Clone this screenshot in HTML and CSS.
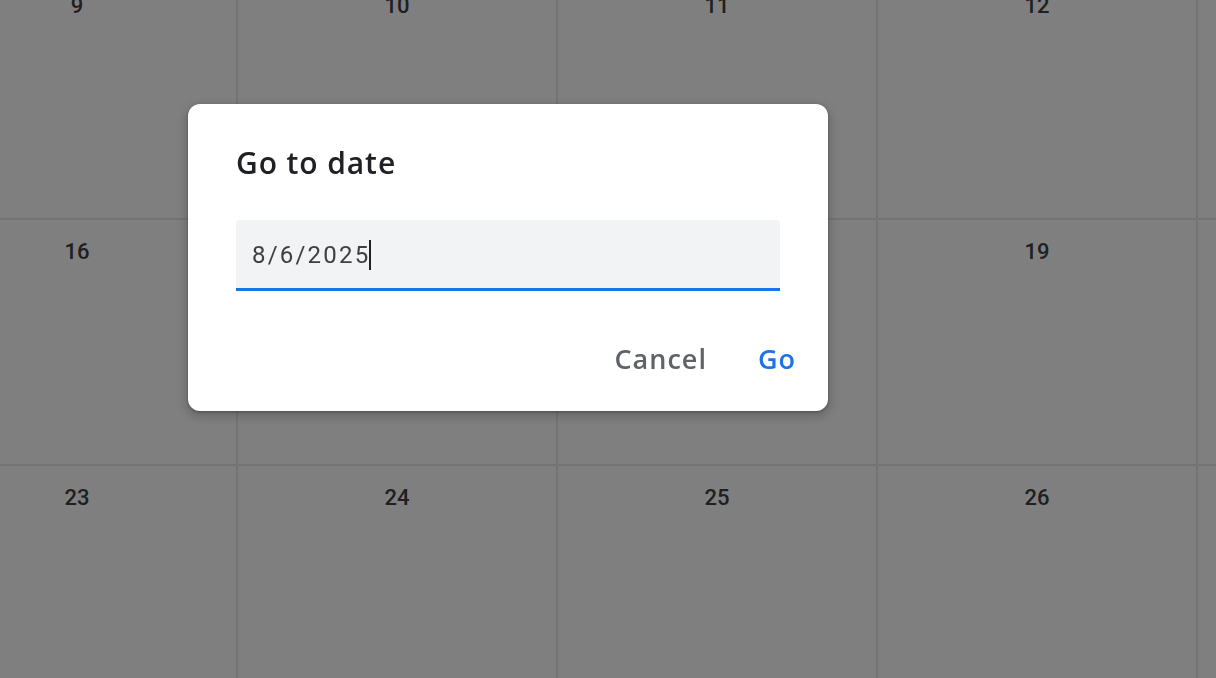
FILE: index.html
```html
<!DOCTYPE html>
<html>

<head>
    <title>Calendar - Go to date</title>
    <link rel="stylesheet" href="styles.css">
</head>

<body>
    <div class="calendar">
        <div class="cell"><span class="day">9</span></div>
        <div class="cell"><span class="day">10</span></div>
        <div class="cell"><span class="day">11</span></div>
        <div class="cell"><span class="day">12</span></div>
        <div class="cell"><span class="day">13</span></div>
        <div class="cell"><span class="day">16</span></div>
        <div class="cell"><span class="day">17</span></div>
        <div class="cell"><span class="day">18</span></div>
        <div class="cell"><span class="day">19</span></div>
        <div class="cell"><span class="day">20</span></div>
        <div class="cell"><span class="day">23</span></div>
        <div class="cell"><span class="day">24</span></div>
        <div class="cell"><span class="day">25</span></div>
        <div class="cell"><span class="day">26</span></div>
        <div class="cell"><span class="day">27</span></div>
    </div>

    <div class="scrim"></div>

    <div class="dialog">
        <h2 class="title">Go to date</h2>
        <div class="field">
            <span class="value">8/6/2025</span><span class="caret"></span>
        </div>
        <div class="actions">
            <button class="btn cancel">Cancel</button>
            <button class="btn go">Go</button>
        </div>
    </div>
</body>

</html>
```

FILE: styles.css
```css
* {
    box-sizing: border-box;
}

body {
    margin: 0;
    overflow: hidden;
    background-color: #fff;
    font-family: Roboto, "Liberation Sans", sans-serif;
}

.calendar {
    display: grid;
    grid-template-columns: repeat(5, 320px);
    grid-auto-rows: 246px;
    margin: -26px 0 0 -82px;
}

.cell {
    border-right: 2px solid #e6e6e6;
    border-bottom: 2px solid #e6e6e6;
    padding-top: 19px;
    text-align: center;
}

.day {
    font-size: 22px;
    line-height: 26px;
    font-weight: 500;
    color: #3c4043;
}

.scrim {
    position: fixed;
    inset: 0;
    background-color: rgba(0, 0, 0, 0.5);
}

.dialog {
    position: absolute;
    left: 188px;
    top: 104px;
    width: 640px;
    padding: 41px 48px 29px;
    border-radius: 12px;
    background-color: #fff;
    box-shadow: 0 1px 3px rgba(0, 0, 0, 0.3), 0 4px 8px 3px rgba(0, 0, 0, 0.15);
}

.title {
    margin: 0;
    font-family: "Open Sans", sans-serif;
    font-size: 30px;
    line-height: 36px;
    font-weight: 600;
    letter-spacing: 0.9px;
    color: #202124;
}

.field {
    display: flex;
    align-items: center;
    height: 71px;
    margin-top: 39px;
    padding: 2px 0 0 16px;
    border-bottom: 3px solid #1a73e8;
    border-radius: 4px 4px 0 0;
    background-color: #f1f3f4;
}

.value {
    font-size: 24px;
    color: #3c4043;
    letter-spacing: 2.2px;
}

.caret {
    width: 2px;
    height: 30px;
    margin-left: -1px;
    background-color: #202124;
}

.actions {
    display: flex;
    justify-content: flex-end;
    gap: 27px;
    margin: 43px -28px 0 0;
}

.btn {
    height: 48px;
    padding: 0 12px;
    border: none;
    background: none;
    font-family: "Open Sans", sans-serif;
    font-size: 27px;
    font-weight: 600;
    letter-spacing: 1px;
}

.cancel {
    color: #5f6368;
}

.go {
    color: #1a73e8;
}
```
